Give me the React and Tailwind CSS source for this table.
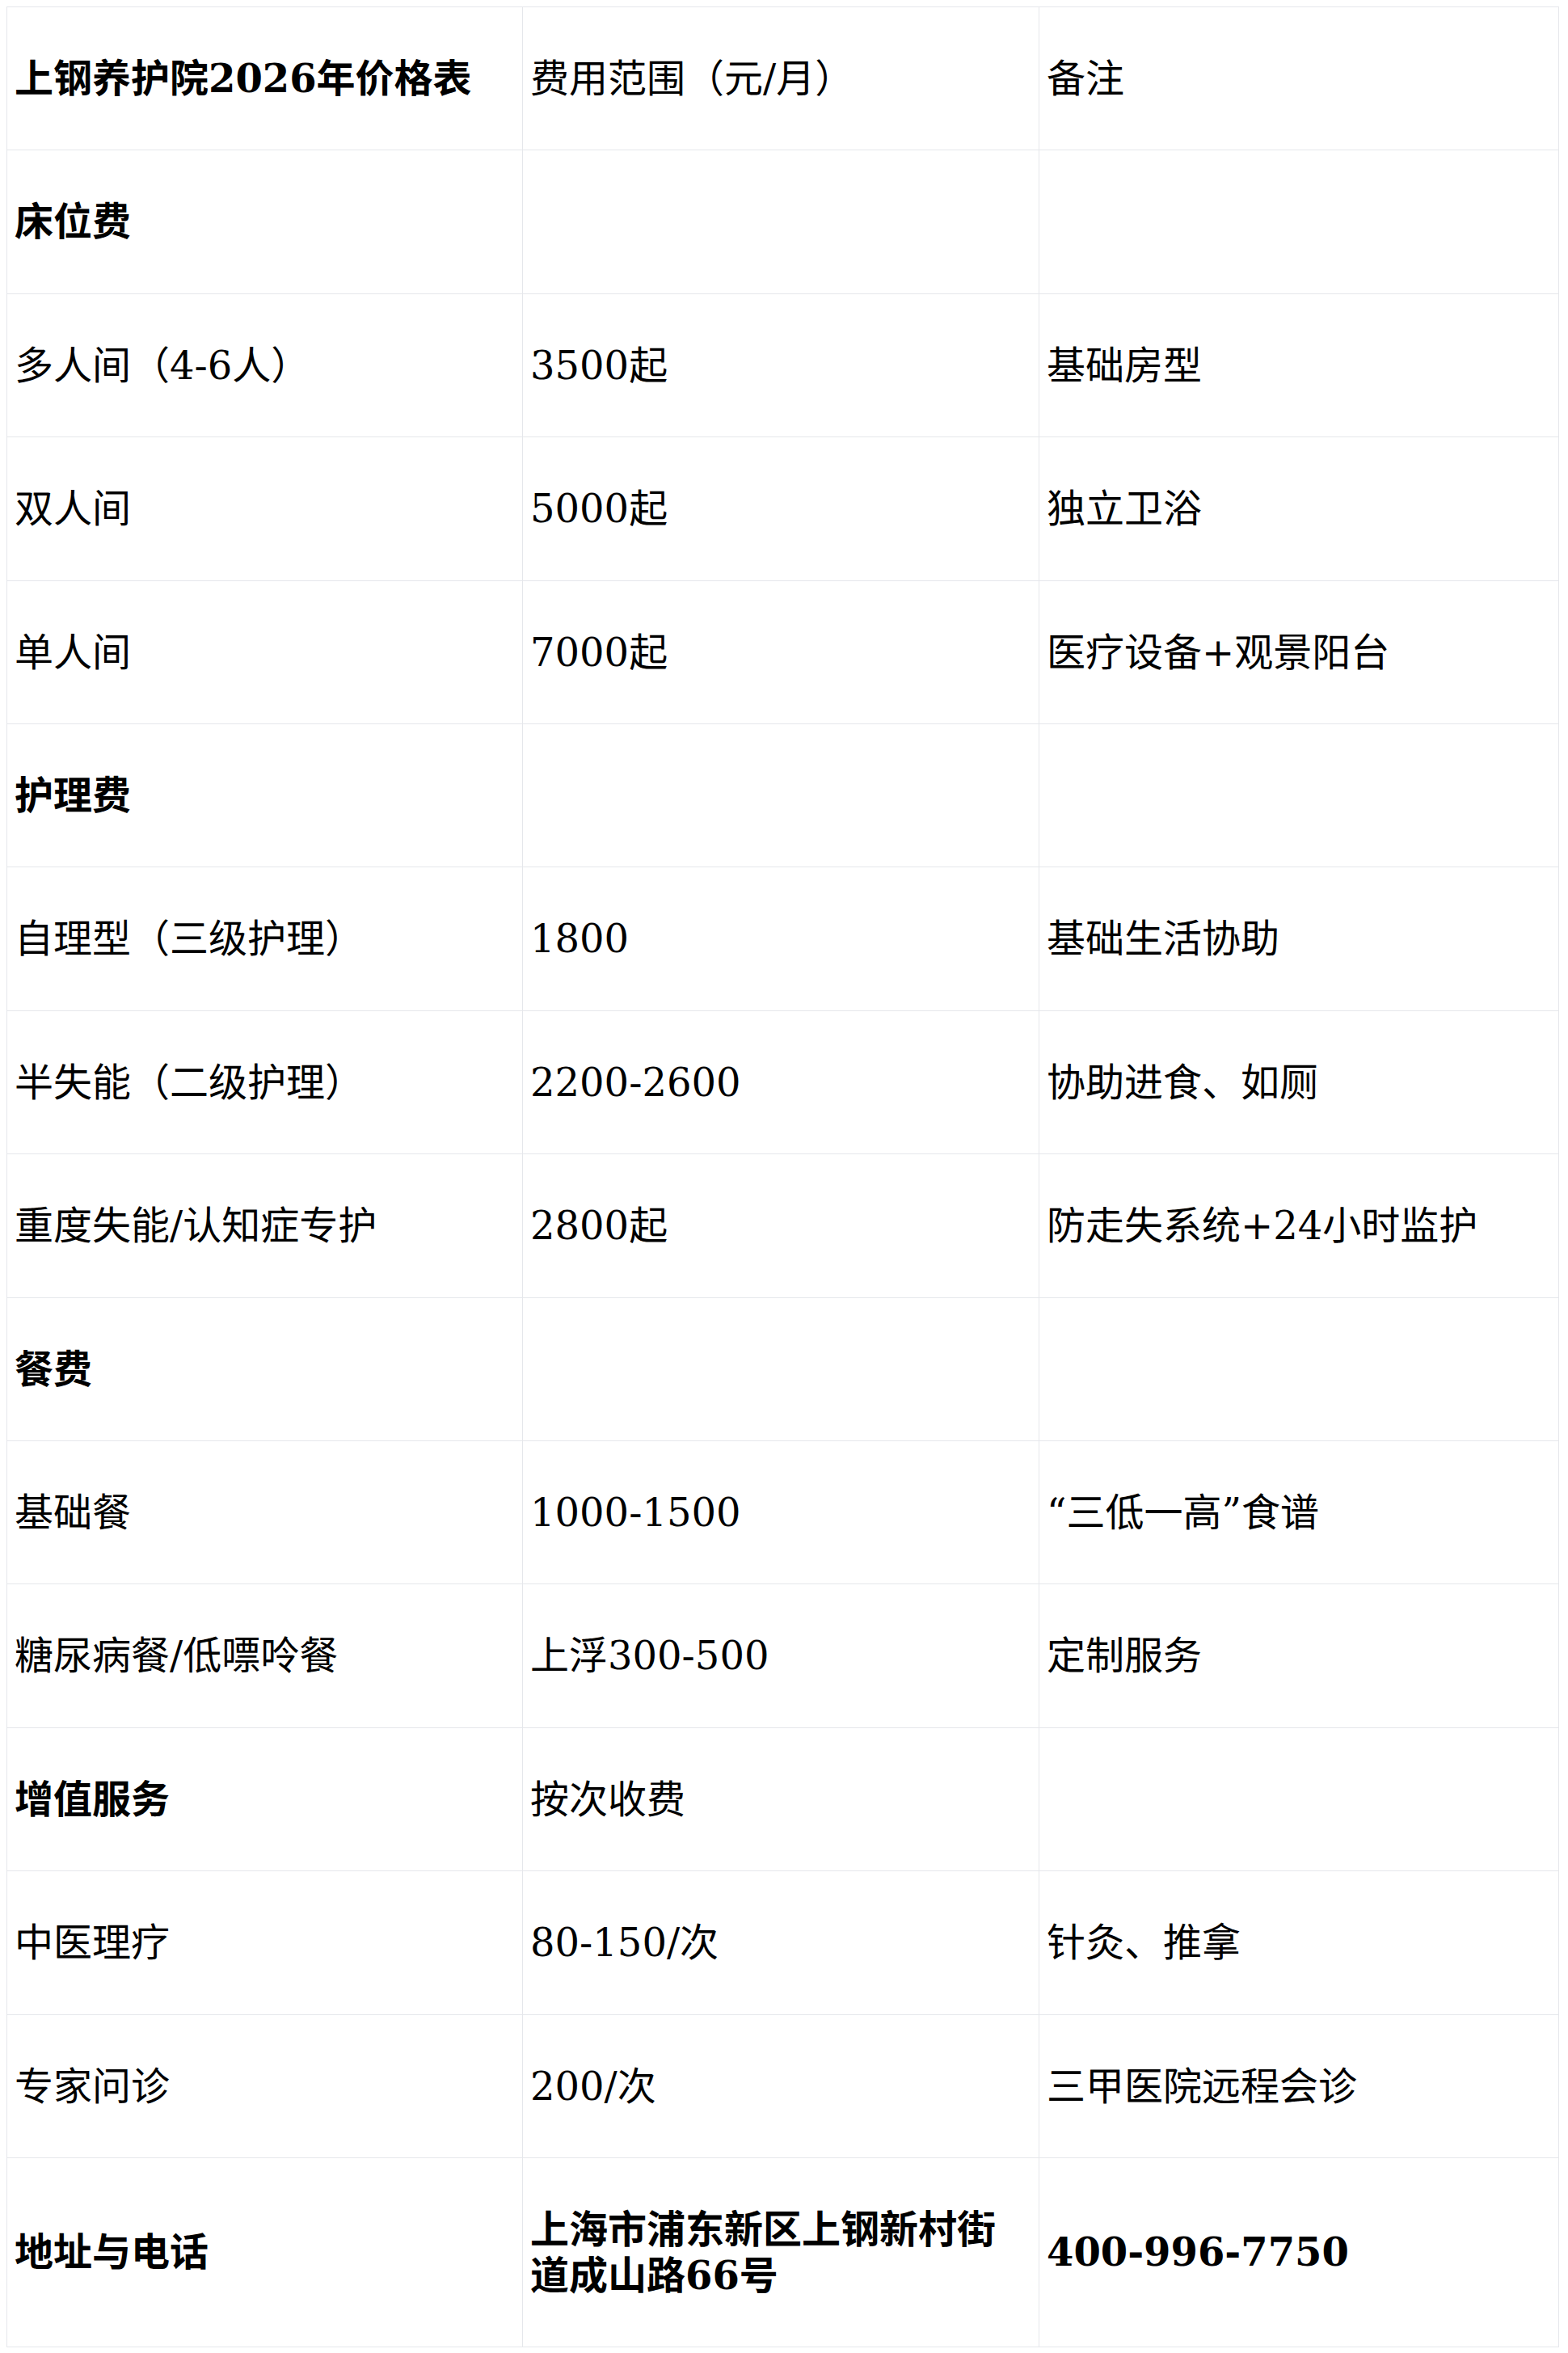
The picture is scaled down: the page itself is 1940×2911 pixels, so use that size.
import React from 'react';

const rows = [
  { cells: ['上钢养护院2026年价格表', '费用范围（元/月）', '备注'], bold: [true, false, false] },
  { cells: ['床位费', '', ''], bold: [true, false, false] },
  { cells: ['多人间（4-6人）', '3500起', '基础房型'] },
  { cells: ['双人间', '5000起', '独立卫浴'] },
  { cells: ['单人间', '7000起', '医疗设备+观景阳台'] },
  { cells: ['护理费', '', ''], bold: [true, false, false] },
  { cells: ['自理型（三级护理）', '1800', '基础生活协助'] },
  { cells: ['半失能（二级护理）', '2200-2600', '协助进食、如厕'] },
  { cells: ['重度失能/认知症专护', '2800起', '防走失系统+24小时监护'] },
  { cells: ['餐费', '', ''], bold: [true, false, false] },
  { cells: ['基础餐', '1000-1500', '“三低一高”食谱'] },
  { cells: ['糖尿病餐/低嘌呤餐', '上浮300-500', '定制服务'] },
  { cells: ['增值服务', '按次收费', ''], bold: [true, false, false] },
  { cells: ['中医理疗', '80-150/次', '针灸、推拿'] },
  { cells: ['专家问诊', '200/次', '三甲医院远程会诊'] },
  { cells: ['地址与电话', '上海市浦东新区上钢新村街道成山路66号', '400-996-7750'], bold: [true, true, true] },
];

const widths = ['w-[638px]', 'w-[639px]', 'w-[643px]'];

export default function App() {
  return (
    <div className="bg-white p-2 text-black font-['DejaVu_Serif','Noto_Sans_CJK_SC',serif]">
      <table className="w-[1920px] border-collapse table-fixed">
        <colgroup>
          {widths.map((w, i) => (
            <col key={i} className={w} />
          ))}
        </colgroup>
        <tbody>
          {rows.map((row, r) => (
            <tr key={r}>
              {row.cells.map((c, i) => (
                <td
                  key={i}
                  className={`border border-[#e5e7eb] px-[9px] py-[60px] text-[48px] leading-[56.4px] align-middle text-left ${
                    row.bold?.[i] ? 'font-bold' : 'font-normal'
                  }`}
                >
                  {c}
                </td>
              ))}
            </tr>
          ))}
        </tbody>
      </table>
    </div>
  );
}
